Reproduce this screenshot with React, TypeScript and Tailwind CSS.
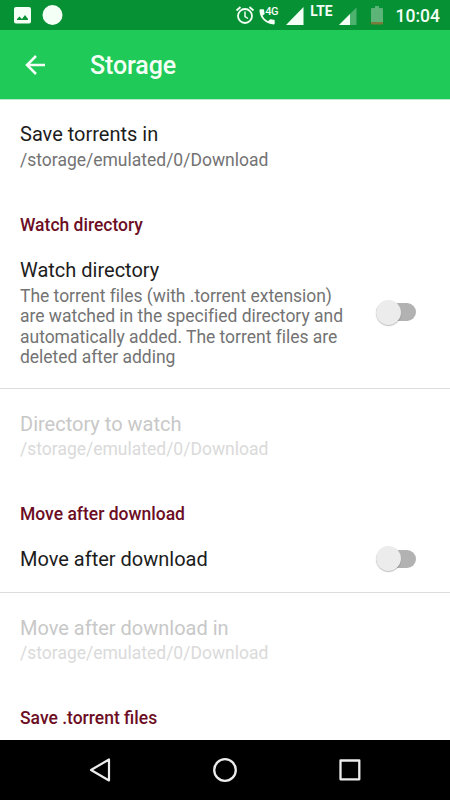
import { useState } from "react";

function StatusBar() {
  return (
    <div className="flex h-[30px] shrink-0 items-center justify-between bg-[#079135] pr-[10px] pl-3.5 text-[#f4fff6]">
      <svg width="50" height="30" viewBox="0 0 50 30" fill="currentColor">
        <path fillRule="evenodd" d="M2 7h13a2 2 0 0 1 2 2v12.500a2 2 0 0 1-2 2H2a2 2 0 0 1-2-2V9a2 2 0 0 1 2-2zM3 20h11v-1l-3-4-3 4-2.500-2.500L3 19z" />
        <circle cx="38.500" cy="15" r="10" />
      </svg>
      <div className="flex items-center">
        <svg width="20" height="30" viewBox="0 0 20 30" fill="none" stroke="currentColor">
          <circle cx="10" cy="16" r="7" strokeWidth="1.800" />
          <path d="M10 11.500v5l3 2" strokeWidth="1.500" />
          <path d="M1.500 10.500l4-3.500M18.500 10.500l-4-3.500" strokeWidth="1.800" />
        </svg>
        <div className="relative ml-[4px] h-[30px] w-[20px]">
          <svg className="block" width="20" height="30" viewBox="0 0 20 30" fill="currentColor">
            <path d="M3.500 15.800a12.800 12.800 0 0 0 5.500 5.500l1.800-1.800a.85.85 0 0 1 .9-.2c1 .3 2 .5 3.200.5.500 0 .8.400.8.800v3c0 .5-.3.800-.8.800A14.300 14.300 0 0 1 .5 10.200c0-.5.400-.9.900-.9h2.900c.5 0 .8.400.8.900 0 1 .2 2.100.5 3.100.1.300 0 .6-.2.900z" />
          </svg>
          <span className="absolute top-[5px] left-[6px] text-[11px] leading-[14px] font-medium tracking-[-0.7px]">4G</span>
        </div>
        <svg className="ml-[7px]" width="18" height="30" viewBox="0 0 18 30" fill="currentColor">
          <path d="M0 25L17.500 7v18z" />
        </svg>
        <span className="ml-[6px] h-[30px] pt-[4px] text-[13.800px] leading-[15px] font-bold">LTE</span>
        <svg className="ml-[6px]" width="18" height="30" viewBox="0 0 18 30" fill="currentColor">
          <path d="M0 25L17.500 7.500V25z" opacity=".3" />
          <path d="M0 25L11 14v11z" />
        </svg>
        <svg className="ml-[14px]" width="12" height="30" viewBox="0 0 12 30">
          <path d="M4 6h4v2h3a1 1 0 0 1 1 1v13H0V9a1 1 0 0 1 1-1h3z" fill="#5cb478" />
          <path d="M0 22h12v1.500a1 1 0 0 1-1 1H1a1 1 0 0 1-1-1z" fill="#7c7b3b" />
        </svg>
        <span className="ml-[13px] pt-px text-[17.500px] leading-5 font-medium">10:04</span>
      </div>
    </div>
  );
}

function Preference({ title, summary, disabled }: { title: string; summary: string; disabled?: boolean }) {
  return (
    <div className={disabled ? "px-5 text-[#c8c8c8]" : "px-5 text-[#1c1c1c]"}>
      <p className="text-[20px] leading-[26px]">{title}</p>
      <p className={disabled ? "mt-[2px] text-[17.500px] leading-[20.500px] text-[#dadada]" : "mt-[3px] text-[17.500px] leading-[20.500px] text-[#737373]"}>{summary}</p>
    </div>
  );
}

function CategoryTitle({ children }: { children: string }) {
  return <h2 className="px-5 text-[17.500px] leading-[20px] font-medium text-[#6c0d24]">{children}</h2>;
}

function Toggle({ label }: { label: string }) {
  const [on, setOn] = useState(false);

  return (
    <button type="button" role="switch" aria-label={label} aria-checked={on} onClick={() => setOn(!on)} className="flex h-[26px] w-10 shrink-0 items-center rounded-full">
      <span className={on ? "flex h-[18px] w-10 items-center justify-end rounded-full bg-[#8fe3aa]" : "flex h-[18px] w-10 items-center rounded-full bg-[#b2b2b2]"}>
        <span className={on ? "size-[25px] shrink-0 rounded-full bg-[#20ca58]" : "size-[25px] shrink-0 rounded-full bg-[#ececec] shadow-[0_1px_1px_rgba(0,0,0,0.25)]"} />
      </span>
    </button>
  );
}

export default function App() {
  return (
    <div className="flex h-[800px] w-[450px] flex-col overflow-hidden bg-white font-['Roboto',sans-serif]">
      <StatusBar />
      <header className="flex h-[70px] shrink-0 items-center border-b border-[#b5ecc8] bg-[#20ca58] text-[#f4fff6]">
        <svg className="ml-[25px]" width="21" height="20" viewBox="0 0 21 20" fill="none" stroke="currentColor" strokeWidth="2.500">
          <path d="M20 10H2.500M11 1L2 10l9 9" />
        </svg>
        <h1 className="ml-[44px] pt-[2px] text-[25px] leading-[30px] font-medium tracking-[-0.1px]">Storage</h1>
      </header>

      <main className="flex-1 overflow-hidden">
        <section className="h-[115px] pt-[21px]">
          <Preference title="Save torrents in" summary="/storage/emulated/0/Download" />
        </section>

        <CategoryTitle>Watch directory</CategoryTitle>
        <div className="flex h-[154px] items-center justify-between border-b border-[#dcdcdc] pt-[21px] pr-[34px] pb-[20px] pl-5">
          <div className="w-[335px]">
            <p className="text-[20px] leading-[26px] text-[#1c1c1c]">Watch directory</p>
            <p className="mt-[3px] text-[17.500px] leading-[20.500px] tracking-[-0.02px] text-[#737373]">
              The torrent files (with .torrent extension) are watched in the specified directory and automatically added. The torrent files are deleted after adding
            </p>
          </div>
          <Toggle label="Watch directory" />
        </div>
        <section className="h-[115px] pt-[22px]">
          <Preference title="Directory to watch" summary="/storage/emulated/0/Download" disabled />
        </section>

        <CategoryTitle>Move after download</CategoryTitle>
        <div className="flex h-[69px] items-center justify-between border-b border-[#dcdcdc] pt-px pr-[34px] pl-5">
          <p className="text-[20px] leading-[26px] text-[#1c1c1c]">Move after download</p>
          <Toggle label="Move after download" />
        </div>
        <section className="h-[115px] pt-[22px]">
          <Preference title="Move after download in" summary="/storage/emulated/0/Download" disabled />
        </section>

        <CategoryTitle>Save .torrent files</CategoryTitle>
      </main>

      <nav className="flex h-[60px] shrink-0 items-center justify-between bg-black pr-[89px] pl-[89px] text-[#ececec]">
        <svg width="22" height="26" viewBox="0 0 22 26" fill="none" stroke="currentColor" strokeWidth="2.200" strokeLinejoin="round">
          <path d="M20 2.500v21L2 13z" />
        </svg>
        <svg width="26" height="26" viewBox="0 0 26 26" fill="none" stroke="currentColor" strokeWidth="2.300">
          <circle cx="13" cy="13" r="10.800" />
        </svg>
        <svg width="22" height="26" viewBox="0 0 22 26" fill="none" stroke="currentColor" strokeWidth="2.300" strokeLinejoin="round">
          <rect x="1.500" y="3.500" width="18.800" height="18.800" />
        </svg>
      </nav>
    </div>
  );
}
